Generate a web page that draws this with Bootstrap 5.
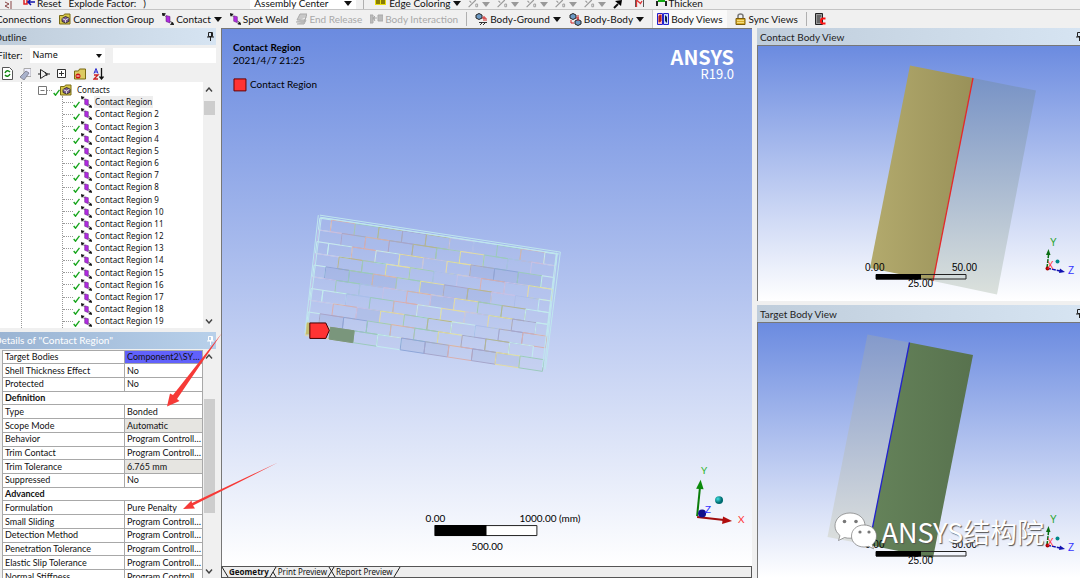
<!DOCTYPE html>
<html lang="en">
<head>
<meta charset="utf-8">
<meta name="viewport" content="width=device-width, initial-scale=1">
<title>Contact Region</title>
<link href="https://cdn.jsdelivr.net/npm/bootstrap@5.3.0/dist/css/bootstrap.min.css" rel="stylesheet">
<style>
body{font-family:Lato,"Noto Sans","Noto Sans CJK SC",sans-serif;font-size:10px;line-height:12px;color:#111;background:#fff}
svg{display:block;flex:none}
.app{height:100vh;padding-bottom:3px;background:#fff}
.frame{background:#f0f0f0;min-height:0}
button,.plain{border:0;background:none;padding:0;color:inherit;font:inherit}
.bar{white-space:nowrap;overflow:hidden;background:#f0f0f0;flex:none}
.bar button{display:flex;align-items:center;gap:2px;flex:none}
.bar-top{height:10px;border-bottom:1px solid #c4c4c4;padding-left:4px;gap:7px;align-items:flex-end}
.bar-main{height:18px;gap:8px}
.bar-main button:disabled{color:#a8a8a8}
.first-tool{margin-left:-4px}
.caret{width:0;height:0;border:4px solid transparent;border-top:5px solid #111;border-bottom:0}
.bar-main .caret{margin-left:1px}
.caret.dim{border-top-color:#999}
.vsep{width:1px;height:14px;background:#b0b0b0;flex:none}
.pressed{background:#fafafa;border-left:1px solid #ccc;padding:3px 5px 3px 4px}
.field{background:#fff;border:0;border-radius:0;height:12px;padding:0;font:inherit;color:inherit;appearance:none;outline-offset:-1px}
.factor{width:100px;background:none}
.combo{width:106px;justify-content:space-between}
.work{display:grid;grid-template-columns:216px minmax(0,1fr) minmax(0,323px);column-gap:5px;min-height:0}
.pane{min-width:0;min-height:0}
.caption{height:17px;flex:none;padding:0 2px 0 3px;background:linear-gradient(90deg,#bfcddb,#d6e4f2);color:#222}
.caption.active{background:linear-gradient(90deg,#9ab4d3,#b8d0ea);color:#fff}
.caption.cut{padding-left:0;padding-right:2px;overflow:hidden}
.caption.cut span{margin-left:-6px}
.caption.flow{padding-right:0;overflow:hidden}
.caption.flow svg{margin-right:-3px}
.filter{height:20px;flex:none;gap:4px;overflow:hidden}
.filter label{margin-left:-3px}
.filter select{width:75px;height:15px;padding-left:2px;background:#fff;font-family:"Noto Sans",sans-serif;font-size:9px}
.filter input{height:15px;min-width:0}
.filter .pick{position:relative}
.filter .pick .caret{position:absolute;right:3px;top:6px;border-width:4px 3px 0}
.icons{height:17px;flex:none;padding-left:2px;gap:7px}
.tree-box{flex:243 1 0;background:#fff;overflow:hidden}
.tree{font:8px/12px "Noto Sans",sans-serif;position:relative;padding-top:2px}
.tree::before,.tree::after{content:"";position:absolute;left:21px;top:0;bottom:0;border-left:1px dotted #999}
.tree::after{left:62px;top:14px}
.tree .node{flex:1 1 0;display:flex;align-items:center;padding-left:63px;min-height:0}
.tree .node::before{content:"";width:10px;border-top:1px dotted #999}
.tree .root{padding-left:38px}
.tree .root::before{display:none}
.tree .pickd span{background:#eee}
.tree span{padding:0 1px}
.kind{margin:0 2px 0 1px}
.scroll{width:13px;flex:none;background:#f0f0f0;padding:5px 2px 4px}
.scroll i{display:block;background:#cdcdcd;width:11px;margin:0 -1px}
.scroll .thumb-sm{height:14px;margin-top:9px}
.scroll .thumb-lg{height:52%;margin-top:40px}
.props-box{flex:227 1 0;overflow:hidden}
.props-clip{min-width:0;overflow:hidden;padding:1px 0 0 2px}
.props{width:100%;height:calc(100% + 6px);table-layout:fixed;border-collapse:collapse;font-size:9px;line-height:12px;background:#fff}
.props td,.props th{border:1px solid #a8a8a8;padding:0 0 0 2px;white-space:nowrap;overflow:hidden;text-overflow:ellipsis;font-weight:400}
.props th:first-child{width:122px}
.props th[colspan]{font-weight:700}
.props .ro{background:#e6e5e1}
.props .hot{background:#6161fb}
.marks{position:absolute;left:0;top:0;overflow:visible;pointer-events:none;z-index:3}
.view{background:linear-gradient(#6b8be0,#fff);border-left:1px solid #777;border-top:1px solid #777;min-height:0;overflow:hidden}
.view svg{width:100%;height:100%}
.half{flex:256 1 0}
.tabs{height:12px;flex:none;border:1px solid #555;background:#eee;font:8px/10px "Noto Sans",sans-serif}
.tabs .on{font-weight:700}
.small-cap{font:10px "Liberation Sans",sans-serif}
.brand{font:700 20px "Noto Sans CJK SC",sans-serif}
.release{font:13px "Noto Sans CJK SC",sans-serif}
.sign{font:27px "Noto Sans CJK SC",sans-serif}
</style>
</head>
<body>
<svg width="0" height="0" class="position-absolute">
<defs>
<symbol id="contact" viewBox="0 0 12 12"><path d="M4 2.500l4 1v6.500l-4-1.500z" fill="#b02be0" stroke="#51156b" stroke-width=".5"/><path d="M0 0l3.500.8L1 3zM2 2l1.500 1.500M12 12l-3.500-.5 2-2.300zM10 10L8.500 8" fill="#111" stroke="#111" stroke-width=".7"/></symbol>
<symbol id="folder" viewBox="0 0 12 12"><path d="M.5 2.500h4l1-1.500h5.500v10H.5z" fill="#d8c84a" stroke="#7a6b14"/><path d="M3 5.500l3.500-2L10 5v3.500L6.500 10 3 8.500z" fill="#7c5c94" stroke="#222" stroke-width=".8"/><path d="M3.500 5.800l3 1.200L9.500 5.300M6.500 7v2.500" stroke="#ddd" fill="none"/></symbol>
<symbol id="tick" viewBox="0 0 7 7"><path d="M.7 4l1.800 2.200L6.500.8" fill="none" stroke="#17a51c" stroke-width="1.400"/></symbol>
<symbol id="pin" viewBox="0 0 7 9"><path d="M1.500.5h4v4h-4zM4.500.5v4M0 5h7M3.500 5v4" fill="none" stroke="currentColor"/></symbol>
<symbol id="up" viewBox="0 0 8 5"><path d="M1 4.500l3-3.500 3 3.500" fill="none" stroke="#444" stroke-width="1.400"/></symbol>
<symbol id="down" viewBox="0 0 8 5"><path d="M1 .5L4 4 7 .5" fill="none" stroke="#444" stroke-width="1.400"/></symbol>
<symbol id="edge" viewBox="0 0 12 10"><path d="M0 8l8-8M1 1l2 2" stroke="#999" stroke-width="1.300" fill="none"/><path d="M8 4.500h2v3H8z" fill="none" stroke="#999"/></symbol>
<linearGradient id="gold"><stop stop-color="#b3aa6d"/><stop offset="1" stop-color="#999159"/></linearGradient>
<linearGradient id="leaf"><stop stop-color="#65835a"/><stop offset="1" stop-color="#58724e"/></linearGradient>
<linearGradient id="mist" x2="0" y2="1"><stop stop-color="#7893c6"/><stop offset="1" stop-color="#dbe1dc"/></linearGradient>
<linearGradient id="fog" x2="0" y2="1"><stop stop-color="#849acb"/><stop offset="1" stop-color="#dde0dd"/></linearGradient>
<radialGradient id="teal" cx=".35" cy=".35"><stop stop-color="#3fe0e0"/><stop offset="1" stop-color="#006c70"/></radialGradient>
<g id="mini-scale"><path d="M876 274.500h90v4.500h-90z" fill="none" stroke="#222"/><path d="M876 274h45v5.500h-45z"/><text x="865" y="271">0.00</text><text x="952" y="271">50.00</text><text x="908" y="287">25.00</text></g>
<g id="mini-axes"><path d="M1047 268l1.500-13" stroke="#0a6d12" stroke-width="1.500" stroke-dasharray="4 1"/><path d="M1046 255l2.500-6 2 6z" fill="#0a6d12"/><path d="M1047 268l13 3" stroke="#1010b0" stroke-width="1.500" stroke-dasharray="4 1"/><path d="M1060 268.500l5 3.500-6 1z" fill="#1010b0"/><circle cx="1047.500" cy="268.500" r="2" fill="#a00"/><circle cx="1057.500" cy="261.500" r="2" fill="#088"/><text x="1050" y="246" fill="#28a428">Y</text><text x="1047" y="269" fill="#f33">X</text><text x="1068" y="274" fill="#33f">Z</text></g>
</defs>
</svg>

<div class="app d-flex flex-column">
<div class="frame d-flex flex-column flex-fill">
<div class="bar bar-top d-flex">
  <svg width="8" height="8"><path d="M1 1l4 2-4 2 4 2M7 0v8" stroke="#844" fill="none"/></svg>
  <button type="button" class="ms-1"><svg width="12" height="8"><path d="M1 0v5h3V0" fill="none" stroke="#d22" stroke-width="1.500"/><path d="M5 3h7M8 0L5 3l3 3" stroke="#11a" stroke-width="1.500" fill="none"/></svg>Reset</button>
  <label for="explode">Explode Factor:</label>
  <input id="explode" type="text" class="field plain factor" value=")">
  <button type="button" class="field combo"><span class="ps-1">Assembly Center</span><span class="caret me-1"></span></button>
  <span class="vsep"></span>
  <button type="button" class="ms-1"><svg width="12" height="8"><path d="M0 0h11v6H0z" fill="#e8dc10"/><path d="M1 0h4v5H1zM6 0h4v5H6z" fill="#877d05"/></svg>Edge Coloring<span class="caret"></span></button>
  <button type="button" disabled aria-label="Free edges"><svg width="12" height="9"><use href="#edge"/></svg><span class="caret dim"></span></button>
  <button type="button" disabled aria-label="Single edges"><svg width="12" height="9"><use href="#edge"/></svg><span class="caret dim"></span></button>
  <button type="button" disabled aria-label="Double edges"><svg width="12" height="9"><use href="#edge"/></svg><span class="caret dim"></span></button>
  <button type="button" disabled aria-label="Triple edges"><svg width="12" height="9"><use href="#edge"/></svg><span class="caret dim"></span></button>
  <button type="button" disabled aria-label="Multiple edges"><svg width="12" height="9"><use href="#edge"/></svg><span class="caret dim"></span></button>
  <svg width="10" height="9"><path d="M1 8l4-4" stroke="#111" stroke-width="2"/><path d="M2 1l7-1-1 6z"/></svg>
  <svg width="11" height="9" class="ms-1"><path d="M1.500 7V0M9.500 7V0" stroke="#555"/><path d="M2.500 7V0l4 3.500L8 1" stroke="#d33" stroke-width="1.300" fill="none"/></svg>
  <button type="button" class="ms-1"><svg width="11" height="9"><path d="M1 7V2M10 7V2" stroke="#222" stroke-width="2"/><path d="M2 2h7" stroke="#1a1" stroke-width="2"/></svg>Thicken</button>
</div>
<div class="bar bar-main d-flex align-items-center">
  <button type="button" class="first-tool">Connections</button>
  <button type="button"><svg width="12" height="12"><use href="#folder"/></svg>Connection Group</button>
  <button type="button"><svg width="12" height="12"><use href="#contact"/></svg>Contact<span class="caret"></span></button>
  <button type="button"><svg width="11" height="12"><use href="#contact"/></svg>Spot Weld</button>
  <button type="button" disabled><svg width="11" height="12"><path d="M1 7l3-6h7L9 7zM0 9h8l2-5M1 11h7l2-4" fill="#c8c8c8" stroke="#aaa"/></svg>End Release</button>
  <button type="button" disabled><svg width="13" height="10"><path d="M0 1h3v8H0zM8 1h5v6H8zM3 4h4M5 2L3 4l2 3" fill="#bbb" stroke="#aaa"/></svg>Body Interaction</button>
  <span class="vsep"></span>
  <button type="button"><svg width="13" height="13"><path d="M1 2l3-1.500L7 2v3L4 6.500 1 5z" fill="#6d9ac4" stroke="#222"/><path d="M7 5h4M9 3v5M11 5v3" stroke="#c22"/><path d="M4 9.500h8M5 12l2-2M8 12l2-2" stroke="#333"/></svg>Body-Ground<span class="caret"></span></button>
  <button type="button"><svg width="13" height="13"><path d="M1 2l3-1.500L7 2v3L4 6.500 1 5zM6 8l3-1.500L12 8v3L9 12.500 6 11z" fill="#6d9ac4" stroke="#222"/><path d="M9 2v6M7 5h3M2 7v3h3" stroke="#c22" fill="none"/></svg>Body-Body<span class="caret"></span></button>
  <button type="button" class="pressed" aria-pressed="true"><svg width="12" height="12"><path d="M.5.5h5v11h-5z" fill="#fbb" stroke="#22c"/><path d="M6.500.5h5v11h-5z" fill="#cdf" stroke="#22c"/><path d="M2 3l2-1v6l-2 1z" fill="#a22" stroke="#a22"/><path d="M8 2l2 2v6L8 8z" fill="#124"/></svg>Body Views</button>
  <button type="button"><svg width="11" height="12"><path d="M3 6V3q0-2 2.500-2T8 3v3" fill="none" stroke="#777" stroke-width="1.500"/><path d="M1 5.500h9v6H1z" fill="#d9ad2c" stroke="#7d5d0b"/><path d="M2 7.500h7M2 9.500h7" stroke="#f4dd80"/></svg>Sync Views</button>
  <span class="vsep"></span>
  <button type="button" aria-label="Contact sheet"><svg width="11" height="12"><path d="M.5.500h7v11h-7z" fill="#999" stroke="#222"/><path d="M2 3h4M2 5h3M2 7h3M2 9h3" stroke="#333"/><path d="M10.500 5.500H8q-2 0-2 2.500t2 2.500h2.500" fill="none" stroke="#f11" stroke-width="2"/></svg></button>
</div>

<main class="work flex-fill">
<section class="pane d-flex flex-column">
  <div class="caption cut d-flex align-items-center justify-content-between"><span>Outline</span><svg width="7" height="9"><use href="#pin"/></svg></div>
  <div class="filter d-flex align-items-center"><label for="by">Filter:</label>
    <span class="pick ms-1"><select id="by" class="field d-block"><option>Name</option></select><span class="caret"></span></span>
    <input type="text" class="field flex-fill ms-1" aria-label="Filter text"></div>
  <div class="icons d-flex align-items-center">
    <svg width="11" height="13"><path d="M.5.500h7l3 3v9H.5z" fill="#fff" stroke="#555"/><path d="M3 6q2-4 5-1M8 7q-2 4-5 1" fill="none" stroke="#181" stroke-width="1.500"/></svg>
    <svg width="11" height="12"><path d="M4 .5h7v8H4z" fill="#eef" stroke="#aaa"/><path d="M0 9l6-6 3 2-5 7z" fill="#a9b2cc" stroke="#889"/></svg>
    <svg width="12" height="10"><path d="M0 5h2M9 5h3M2.500.5v9l7-4.500zM7 3l2 4" fill="#eee" stroke="#222"/></svg>
    <svg width="10" height="10"><path d="M.5.500h8v8h-8zM2 4.500h5M4.500 2v5" fill="#fff" stroke="#333"/></svg>
    <svg width="12" height="12"><path d="M.5 3h4l1-2h6v10H.5z" fill="#dccb62" stroke="#7a6b14"/><circle cx="4" cy="8" r="2.500" fill="#c11"/><path d="M2.500 8h3" stroke="#fff"/></svg>
    <svg width="11" height="12"><path d="M1 5.500L3 .5l2 5M2 4h2" stroke="#22c" fill="none"/><path d="M1 7h4l-4 4h4" stroke="#c22" fill="none" stroke-width="1.300"/><path d="M8.500 0v11M6.500 8.500l2 2.500 2-2.500" stroke="#111" stroke-width="1.300" fill="none"/></svg>
  </div>
  <div class="tree-box d-flex">
    <div class="tree flex-fill d-flex flex-column" id="tree">
      <div class="node root"><svg width="9" height="9"><path d="M.5.500h8v8h-8zM2.500 4.500h4" fill="#fff" stroke="#777"/></svg><svg width="6" height="8"><path d="M0 4.500h6" stroke="#999" stroke-dasharray="1 1"/></svg><svg width="7" height="7" class="mt-1"><use href="#tick"/></svg><svg width="12" height="12"><use href="#folder"/></svg><span class="ms-1">Contacts</span></div>
    </div>
    <div class="scroll d-flex flex-column"><svg width="8" height="5"><use href="#up"/></svg><i class="thumb-sm"></i><svg width="8" height="5" class="mt-auto"><use href="#down"/></svg></div>
  </div>
  <div class="caption active cut d-flex align-items-center justify-content-between mt-1"><span>Details of "Contact Region"</span><svg width="7" height="9"><use href="#pin"/></svg></div>
  <div class="props-box d-flex">
    <div class="props-clip flex-fill">
    <table class="props"><tbody>
      <tr><th>Target Bodies</th><td class="hot">Component2\SYS-2</td></tr>
      <tr><th>Shell Thickness Effect</th><td>No</td></tr>
      <tr><th>Protected</th><td>No</td></tr>
      <tr><th colspan="2">Definition</th></tr>
      <tr><th>Type</th><td>Bonded</td></tr>
      <tr><th>Scope Mode</th><td class="ro">Automatic</td></tr>
      <tr><th>Behavior</th><td>Program Controlled</td></tr>
      <tr><th>Trim Contact</th><td>Program Controlled</td></tr>
      <tr><th>Trim Tolerance</th><td class="ro">6.765 mm</td></tr>
      <tr><th>Suppressed</th><td>No</td></tr>
      <tr><th colspan="2">Advanced</th></tr>
      <tr><th>Formulation</th><td>Pure Penalty</td></tr>
      <tr><th>Small Sliding</th><td>Program Controlled</td></tr>
      <tr><th>Detection Method</th><td>Program Controlled</td></tr>
      <tr><th>Penetration Tolerance</th><td>Program Controlled</td></tr>
      <tr><th>Elastic Slip Tolerance</th><td>Program Controlled</td></tr>
      <tr><th>Normal Stiffness</th><td>Program Controlled</td></tr>
    </tbody></table></div>
    <div class="scroll d-flex flex-column"><svg width="8" height="5"><use href="#up"/></svg><i class="thumb-lg"></i><svg width="8" height="5" class="mt-auto"><use href="#down"/></svg></div>
    <div class="position-absolute"><svg class="marks" width="280" height="180" viewBox="0 350 280 180"><g fill="#f63a37"><path d="M222 334l-45 66 2.500 2-12.500 5.500 3-13 3 1.500z"/><path d="M278 463.500l-85 43 2 3-12 .5 8.500-8.500.5 2.500z"/></g></svg></div>
  </div>
</section>

<section class="pane d-flex flex-column">
  <div class="view flex-fill"><svg viewBox="222 30 531 536">
    <g font-size="10"><text x="233" y="51" font-weight="700">Contact Region</text><text x="233" y="64">2021/4/7 21:25</text><text x="250" y="88">Contact Region</text></g>
    <path d="M234 79h12v12h-12z" fill="#f33" stroke="#600"/>
    <g fill="#fff" text-anchor="end"><text class="brand" x="735" y="65">ANSYS</text><text class="release" x="735" y="79">R19.0</text></g>
    <g id="wall"></g>
    <path d="M307 323h3v12h-4z" fill="#c3bd6e"/>
    <path d="M310 323.500h16l3.500 7.500-3.500 8h-16z" fill="#f33" stroke="#400"/>
    <g font-size="10"><text x="426" y="523">0.00</text><text x="520" y="523">1000.00 (mm)</text><text x="472" y="551">500.00</text></g>
    <path d="M435.500 526.500h102v10h-102z" fill="#fff" stroke="#222"/><path d="M435 526h52v11h-52z"/>
    <path d="M698 517l3-30" stroke="#0b7d0b" stroke-width="2"/><path d="M697 489.500l4.500-9 3 9.500z" fill="#0b8a0b"/>
    <path d="M698 518l27 3" stroke="#a00d0d" stroke-width="2"/><path d="M724 517.500l9 4.500-10 3z" fill="#b00d0d"/>
    <circle cx="703" cy="514.500" r="4" fill="#10108c"/><circle cx="720" cy="501" r="4" fill="url(#teal)"/>
    <g font-size="10"><text x="702" y="475" fill="#2cb52c">Y</text><text x="706" y="514" fill="#33f">Z</text><text x="739" y="524" fill="#f33">X</text></g>
  </svg></div>
  <nav class="tabs d-flex align-items-center" aria-label="Views">
    <svg width="7" height="10"><path d="M0 0l6 10" stroke="#222"/></svg>
    <button type="button" class="on">Geometry</button>
    <svg width="9" height="10"><path d="M1 10L7 0M4 5l3 5" stroke="#222" fill="none"/></svg>
    <button type="button">Print Preview</button>
    <svg width="9" height="10"><path d="M1 10L7 0M2 0l6 10" stroke="#222" fill="none"/></svg>
    <button type="button">Report Preview</button>
    <svg width="9" height="10"><path d="M1 10L7 0" stroke="#222"/></svg>
  </nav>
</section>

<section class="pane d-flex flex-column">
  <div class="caption flow d-flex align-items-center justify-content-between"><span>Contact Body View</span><svg width="7" height="9"><use href="#pin"/></svg></div>
  <div class="view half"><svg viewBox="758 46 322 255">
    <path d="M973 78l63 12.500-39 204-64-13.500z" fill="url(#mist)"/><path d="M910 65.500L973 78l-40 203-63-13z" fill="url(#gold)"/><path d="M973 78l-40 203" stroke="#e22a2a" stroke-width="1.300"/>
    <use href="#mini-scale" class="small-cap"/><use href="#mini-axes" class="small-cap"/>
  </svg></div>
  <div class="caption flow d-flex align-items-center justify-content-between mt-1"><span>Target Body View</span><svg width="7" height="9"><use href="#pin"/></svg></div>
  <div class="view half"><svg viewBox="758 323 322 255">
    <path d="M867.500 334.500l42 8-41 202.500-41-8z" fill="url(#fog)"/><path d="M909.500 342.500l63.500 12.500-40 203-64-13z" fill="url(#leaf)"/><path d="M909.500 342.500l-37 185" stroke="#22c" stroke-width="1.300"/>
    <g transform="translate(0 277)"><use href="#mini-scale" class="small-cap"/><use href="#mini-axes" class="small-cap"/></g>
    <g fill="#fff" stroke="#777" stroke-width=".7"><path d="M850 513c-9 0-15 6-15 13 0 4 2 7 5 9.500l-1.500 5 6-3c2 .6 3.500.7 5.500.7 9 0 15-5.500 15-12.500S859 513 850 513z"/><path d="M864 525c-7.500 0-12.500 5-12.500 11s5 11 12.500 11c1.500 0 3-.2 4.500-.7l5 2.500-1.300-4.200c2.700-2 4.300-5 4.300-8.600 0-6-5-11-12.500-11z"/></g>
    <g fill="#777"><circle cx="844.500" cy="521.500" r="1.800"/><circle cx="856" cy="521.500" r="1.800"/><circle cx="860" cy="532" r="1.600"/><circle cx="869" cy="532" r="1.600"/></g>
    <g class="sign"><text x="881.500" y="543" fill="#fff" style="text-shadow:1px 1px 1px #555">ANSYS结构院</text></g>
  </svg></div>
</section>
</main>
</div>
</div>
<script>
const tree = document.getElementById('tree');
for (let n = 1; n < 20; n++) {
  tree.insertAdjacentHTML('beforeend', `<div class="node${n === 1 ? ' pickd' : ''}"><svg width="7" height="7" class="mt-1"><use href="#tick"/></svg><svg width="11" height="12" class="kind"><use href="#contact"/></svg><span>Contact Region${n > 1 ? ' ' + n : ''}</span></div>`);
}
// Brick wall: half bricks close every even course at both ends.
const ink = {i:'#c4ecef',o:'#d8b0b0',y:'#e2dca4',k:'#b3b791',g:'#9ccabc',b:'#8ea6d8',v:'#c6c2e8',m:'#a6a6cb',s:'#aabfeb'};
const courses = ['iogkmkvsgoi','vmomkgygsv','iioiyvyMBGi','vkgygsvovy','iBGOgYMKvsi','vgsvoVygki','iisgoiyvymi','voVygkismo','iMbgogymki ','ykgiBMoMYg'];
const q = (x, y) => (320 + x * 23.75 - y * 1.45).toFixed(1) + ' ' + (218.500 + x * 3.6 + y * 11.75).toFixed(1);
const cell = (x, w, y, stroke, fill) => `<path d="M${q(x, y)}L${q(x + w, y)}L${q(x + w, y + 1)}L${q(x, y + 1)}z" stroke="${stroke}" fill="${fill}"/>`;
let wall = '';
courses.forEach((row, r) => {
  let x = 0;
  [...row.trim()].forEach((c, n) => {
    const w = r % 2 === 0 && (n === 0 || x > 9) ? .5 : 1;
    const tone = ink[c.toLowerCase()];
    wall += cell(x, w, r, tone, c === c.toUpperCase() ? '#8d9cc733' : '#b9c4e633');
    x += w;
  });
});
wall += cell(1, 1, 9, '#7a967c', '#7a967c');
wall += '<path d="M320 215.500L561 252.500L546 370L545 368L558 254L321.500 218L307 333M318.500 215.500L305 334M320 217.500L560 254.500M543 368l14-115" stroke="#bfe6ee" fill="none"/>';
document.getElementById('wall').innerHTML = wall;
</script>
<script src="https://cdn.jsdelivr.net/npm/bootstrap@5.3.0/dist/js/bootstrap.bundle.min.js"></script>
</body>
</html>
